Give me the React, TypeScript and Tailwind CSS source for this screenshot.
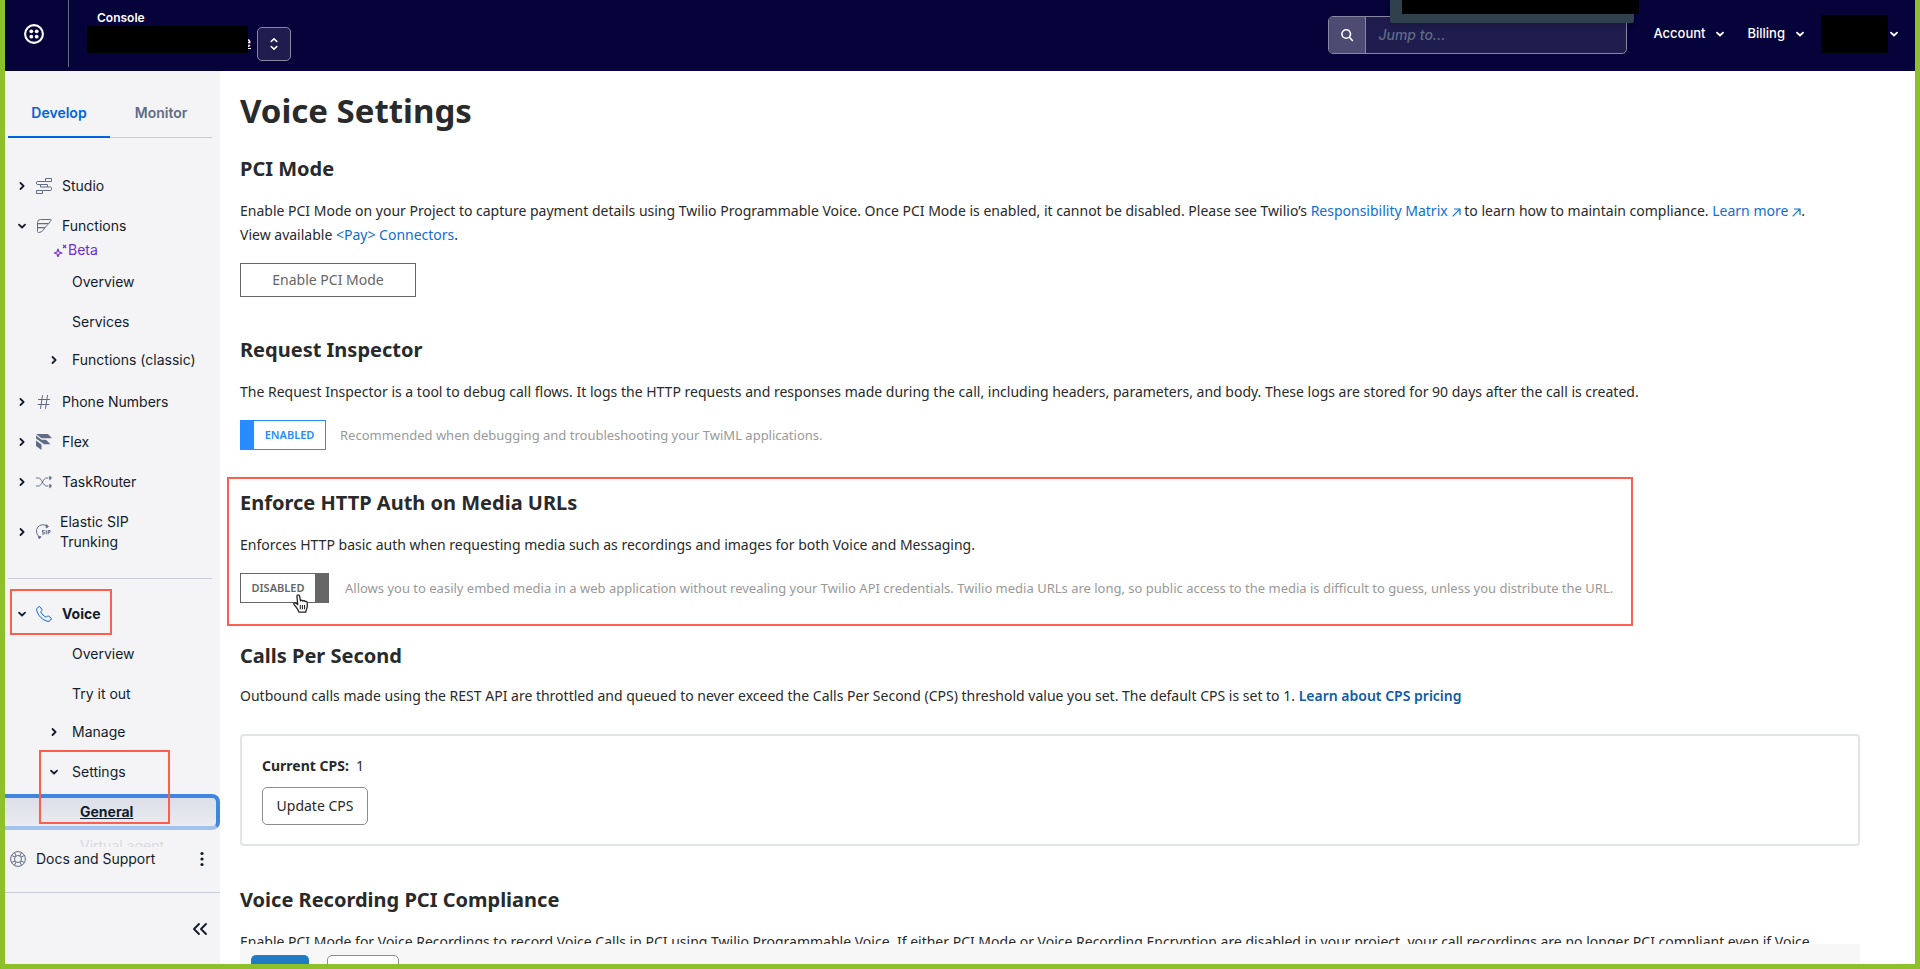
import type { ReactNode } from "react";

type IconProps = { className?: string };

function ChevronRight({ className = "" }: IconProps) {
  return (
    <svg viewBox="0 0 10 10" className={`size-[10px] flex-none ${className}`} fill="none" stroke="currentColor" strokeWidth="1.8" strokeLinecap="round" strokeLinejoin="round" aria-hidden="true">
      <path d="M3.5 2 6.6 5 3.5 8" />
    </svg>
  );
}

function ChevronDown({ className = "" }: IconProps) {
  return (
    <svg viewBox="0 0 10 10" className={`size-[10px] flex-none ${className}`} fill="none" stroke="currentColor" strokeWidth="1.8" strokeLinecap="round" strokeLinejoin="round" aria-hidden="true">
      <path d="M2 3.6 5 6.5 8 3.6" />
    </svg>
  );
}

function TwilioLogo() {
  return (
    <svg viewBox="0 0 20 20" className="size-5" aria-hidden="true">
      <circle cx="10" cy="10" r="8.9" fill="none" stroke="white" strokeWidth="2.1" />
      <g fill="white">
        <circle cx="7.3" cy="7.3" r="1.9" />
        <circle cx="12.7" cy="7.3" r="1.9" />
        <circle cx="7.3" cy="12.7" r="1.9" />
        <circle cx="12.7" cy="12.7" r="1.9" />
      </g>
    </svg>
  );
}

const product = "size-4 flex-none text-[#606b85]";

function StudioIcon() {
  return (
    <svg viewBox="0 0 16 16" className={product} fill="none" stroke="currentColor" strokeWidth="1" strokeLinejoin="round" aria-hidden="true">
      <rect x="9.5" y=".5" width="6" height="3" />
      <path d="M9.5 3.5H1.2c-1 0-1 3 0 3h3.3M4.5 6.5h7v2.5h-7zM11.5 9h3.3c1 0 1 3.5 0 3.5H6.5" />
      <rect x=".5" y="12.5" width="6" height="3" />
    </svg>
  );
}

function FunctionsIcon() {
  return (
    <svg viewBox="0 0 16 16" className={product} fill="none" stroke="currentColor" strokeWidth="1" strokeLinejoin="round" aria-hidden="true">
      <path d="M1.5 5h11l-1.2 1.8H1.5zM1.5 9h8l-1.2 1.8H1.5z" fill="currentColor" fillOpacity=".35" stroke="none" />
      <path d="M4.5 1.5h10.3c.5 0 .6.5.2.9-1.2 1.1-1.5 2.3-2.5 3.6-1 1.4-2.5 2-3.5 3.4C7.8 11.3 6.5 14.5 2.5 14.5c-.7 0-1-.3-1-1V4.5a3 3 0 0 1 3-3ZM1.5 5.5h11M1.5 9.5h7.3" />
    </svg>
  );
}

function HashIcon() {
  return (
    <svg viewBox="0 0 16 16" className={product} fill="none" stroke="currentColor" strokeWidth="1" strokeLinecap="round" aria-hidden="true">
      <path d="M6.5 1.5 4.5 14.5M11.5 1.5l-2 13M2.5 5.5h11M2 10.5h11" />
    </svg>
  );
}

function FlexIcon() {
  return (
    <svg viewBox="0 0 16 16" className={product} fill="currentColor" aria-hidden="true">
      <path d="M0 0h12l4 4.3H5.5L0 0Z" />
      <path d="M0 1.5 5.5 5.8H10l4.5 4.5H8L0 4.5Z" />
      <path d="M0 6.5 5.5 10.5V16L0 12Z" />
    </svg>
  );
}

function TaskRouterIcon() {
  return (
    <svg viewBox="0 0 16 16" className={product} fill="none" stroke="currentColor" strokeWidth="1" strokeLinecap="round" aria-hidden="true">
      <path d="M.5 4h2C6 4 7 12 10.5 12H12M.5 12h2C6 12 7 4 10.5 4H12" />
      <path d="m14 2.5 1.5 1.5L14 5.5ZM14 10.5l1.5 1.5-1.5 1.5Z" fill="currentColor" />
    </svg>
  );
}

function SipIcon() {
  return (
    <svg viewBox="0 0 16 16" className={product} fill="none" stroke="currentColor" strokeWidth="1" strokeLinecap="round" aria-hidden="true">
      <path d="M3 12.5A6.5 6.5 0 0 1 11 2" />
      <path d="m10.5 1 2 1.5-2 1.2ZM3.5 14.5l1.5-1.8-2.3-.2Z" fill="currentColor" />
      <path d="M8.2 6.5H6.5v1.7h1.7V10H6.3M10.2 6.5V10M12.2 10V6.5h1.8v1.8h-1.8" />
    </svg>
  );
}

function PhoneIcon() {
  return (
    <svg viewBox="0 0 16 16" className="size-4 flex-none text-[#0263e0]" fill="none" stroke="currentColor" strokeWidth="1" strokeLinejoin="round" aria-hidden="true">
      <path d="M3 .7C1.5 1.4.4 2.6.7 4.2 1.9 9.6 6.4 14.2 11.8 15.3c1.6.3 2.8-.8 3.5-2.3.2-.5 0-.9-.4-1.2l-2.4-1.7c-.4-.3-.9-.2-1.2.1l-1 1.1C8 10.3 5.7 8 4.7 5.7l1.1-1c.3-.3.4-.8.1-1.2L4.2 1.1C3.9.7 3.5.5 3 .7Z" />
    </svg>
  );
}

function SparkIcon() {
  return (
    <svg viewBox="0 0 13 13" className="size-[13px] flex-none" fill="none" stroke="currentColor" strokeWidth="1.1" strokeLinejoin="round" aria-hidden="true">
      <path d="M4 5 5 8l3 1-3 1-1 3-1-3-3-1 3-1Z" />
      <path d="m9 .8 3.200 3.200M12.200.8 9 4" />
    </svg>
  );
}

function LifebuoyIcon() {
  return (
    <svg viewBox="0 0 16 16" className={product} fill="none" stroke="currentColor" strokeWidth="1" aria-hidden="true">
      <circle cx="8" cy="8" r="7.4" />
      <circle cx="8" cy="8" r="3.5" />
      <path d="M4.5 1.5 6 5M1.5 4.5 5 6M11.5 1.5 10 5M14.5 4.5 11 6M4.5 14.5 6 11M1.5 11.5 5 10M11.5 14.5 10 11M14.5 11.5 11 10" />
    </svg>
  );
}

function ExternalIcon() {
  return (
    <svg viewBox="0 0 9 9" className="ml-1 inline size-[9px]" fill="none" stroke="currentColor" strokeWidth="1.2" aria-hidden="true">
      <path d="M.7 8.3 7.8 1.2M2 1h6v6" />
    </svg>
  );
}

function HandCursor() {
  return (
    <svg viewBox="0 0 14 18" className="absolute top-[21px] left-[53px] h-[19px] w-[15px]" fill="white" stroke="#222" strokeWidth="1.2" strokeLinejoin="round" aria-hidden="true">
      <path d="M3.6 2.2c0-1.8 2.3-1.8 2.6 0L7 6.5c.5-.9 2-.8 2.2.2.6-.8 2-.6 2.2.5.9-.5 2 0 2 1.200v3c0 2.300-1.100 3.200-1.400 5.800H5.500c-.3-2.200-1.800-3.300-3-5.200C1.600 10.700 0 9.700.8 8.800c.8-.9 2.400 0 3.600 1.300Z" />
      <path d="M6.800 10.500v4M8.800 10.500v4M10.800 10.500v4" strokeWidth="1" />
    </svg>
  );
}

const mark = "pointer-events-none absolute border-2 border-[#fb5f50]";

function NavItem({ label, icon, open = false, tall = false, strong = false, children }: { label: string; icon: ReactNode; open?: boolean; tall?: boolean; strong?: boolean; children?: ReactNode }) {
  return (
    <div className="relative">
      <a href="#" className={`flex items-center pl-3 ${tall ? "h-[60px]" : "h-10"}`}>
        {open ? <ChevronDown /> : <ChevronRight />}
        <span className="ml-[9px] flex">{icon}</span>
        <span className={`${tall ? "ml-2 w-24" : "ml-[10px]"} ${strong ? "font-bold" : ""}`}>{label}</span>
      </a>
      {children}
    </div>
  );
}

function SubItem({ label, chevron }: { label: string; chevron?: "right" | "down" }) {
  return (
    <a href="#" className={`flex items-center pl-11 ${chevron === "right" ? "h-9" : "h-10"}`}>
      <span className="w-[23px]">
        {chevron === "right" && <ChevronRight />}
        {chevron === "down" && <ChevronDown />}
      </span>
      {label}
    </a>
  );
}

function Header() {
  return (
    <header className="flex h-[71px] flex-none items-start bg-[#06033a] text-[13px] font-medium text-white">
      <a href="#" aria-label="Home" className="flex h-[67px] w-[64px] flex-none items-center justify-center border-r border-[#606b85] pr-[5px]">
        <TwilioLogo />
      </a>
      <div className="pl-[18px]">
        <div className="pt-[10px] pl-[10px] text-xs leading-4 font-semibold">Console</div>
        <div className="flex items-start">
          <div className="h-[27px] w-[161px] bg-black" />
          <div className="flex h-[31px] w-[3px] items-center justify-end overflow-hidden text-sm underline">e</div>
          <button type="button" aria-label="Switch account" className="mt-px ml-[6px] flex size-[34px] items-center justify-center rounded-[5px] border border-[#8886a0] bg-[#1f1c4e]">
            <svg viewBox="0 0 10 14" className="h-[14px] w-[10px]" fill="none" stroke="white" strokeWidth="1.6" strokeLinecap="round" strokeLinejoin="round" aria-hidden="true">
              <path d="M2.2 4.5 5 1.8l2.8 2.7M2.2 9.5 5 12.2l2.8-2.7" />
            </svg>
          </button>
        </div>
      </div>
      <div className="relative mt-4 ml-auto flex h-[38px] w-[299px] flex-none rounded-[5px] border border-[#8886a0] bg-[#1f1c4e]">
        <button type="button" aria-label="Search" className="flex w-[37px] items-center justify-center rounded-l-[4px] border-r border-[#8886a0] bg-[#4d4b71]">
          <svg viewBox="0 0 14 14" className="size-[14px]" fill="none" stroke="white" strokeWidth="1.6" strokeLinecap="round" aria-hidden="true">
            <circle cx="6.2" cy="6" r="4.3" />
            <path d="m9.4 9.3 3 3.2" />
          </svg>
        </button>
        <input type="text" aria-label="Jump to" placeholder="Jump to..." className="min-w-0 flex-1 bg-transparent px-3 text-sm italic placeholder:text-[#606b85]" />
        <div className="absolute -top-[17px] left-[61px] h-[23px] w-[244px] rounded-b-[2px] bg-[#31404d] shadow-md">
          <div className="ml-3 h-[14px] w-[237px] bg-black" />
        </div>
      </div>
      <nav className="mr-4 ml-[26px] flex h-[67px] items-center">
        <button type="button" className="flex items-center gap-[10px]">
          Account <ChevronDown />
        </button>
        <button type="button" className="ml-[22px] flex items-center gap-[10px]">
          Billing <ChevronDown />
        </button>
        <button type="button" aria-label="Profile" className="ml-4 flex items-center gap-[1px]">
          <span className="h-[38px] w-[67px] bg-black" />
          <ChevronDown />
        </button>
      </nav>
    </header>
  );
}

function Sidebar() {
  return (
    <aside className="flex w-[215px] flex-none flex-col bg-[#f4f4f6] font-['Inter',sans-serif] text-sm leading-5 text-[#121c2d]">
      <div className="mr-2 ml-[3px] flex h-[67px] flex-none border-b border-[#cacdd8] pt-[18px] font-semibold">
        <a href="#" className="-mb-px flex w-[102px] items-center justify-center border-b-2 border-[#0263e0] text-[#0263e0]">Develop</a>
        <a href="#" className="flex w-[102px] items-center justify-center text-[#606b85]">Monitor</a>
      </div>
      <nav className="relative min-h-0 flex-1 overflow-hidden pt-7">
        <NavItem label="Studio" icon={<StudioIcon />} />
        <NavItem label="Functions" icon={<FunctionsIcon />} open>
          <div className="-mt-[7px] mb-px flex h-[22px] items-center gap-px pl-[49px] text-[#6d2ed1]">
            <SparkIcon />
            Beta
          </div>
        </NavItem>
        <SubItem label="Overview" />
        <SubItem label="Services" />
        <div className="pb-1">
          <SubItem label="Functions (classic)" chevron="right" />
        </div>
        <NavItem label="Phone Numbers" icon={<HashIcon />} />
        <NavItem label="Flex" icon={<FlexIcon />} />
        <NavItem label="TaskRouter" icon={<TaskRouterIcon />} />
        <NavItem label="Elastic SIP Trunking" icon={<SipIcon />} tall />
        <hr className="mt-4 mr-2 mb-[15px] ml-[3px] border-[#cacdd8]" />
        <NavItem label="Voice" icon={<PhoneIcon />} open strong>
          <div className={`${mark} -top-[5px] left-[5px] h-[46px] w-[102px]`} />
        </NavItem>
        <SubItem label="Overview" />
        <SubItem label="Try it out" />
        <SubItem label="Manage" chevron="right" />
        <div className="relative pt-[2px]">
          <SubItem label="Settings" chevron="down" />
          <a href="#" className="mt-[2px] flex h-9 items-center rounded-r-lg border-4 border-l-0 border-[#3f86e0] border-b-[#a3c2f0] bg-linear-to-b from-[#dcdfe9] to-[#ebecf0] pl-[75px] font-bold underline">General</a>
          <div className={`${mark} top-0 left-[34px] h-[74px] w-[131px]`} />
        </div>
        <a href="#" className="flex h-8 items-center pl-[75px] text-[#d9dae0]">Virtual agent</a>
      </nav>
      <div className="flex h-[46px] flex-none items-center border-b border-[#cacdd8] pb-[22px] pl-[5px]">
        <LifebuoyIcon />
        <a href="#" className="ml-[10px] flex-1">Docs and Support</a>
        <button type="button" aria-label="More options" className="mr-4">
          <svg viewBox="0 0 4 16" className="h-4 w-1" fill="currentColor" aria-hidden="true">
            <circle cx="2" cy="2.5" r="1.6" />
            <circle cx="2" cy="8" r="1.6" />
            <circle cx="2" cy="13.5" r="1.6" />
          </svg>
        </button>
      </div>
      <div className="flex h-[71px] flex-none justify-end pr-3">
        <button type="button" aria-label="Collapse sidebar" className="h-[72px]">
          <svg viewBox="0 0 16 14" className="h-[14px] w-4" fill="none" stroke="currentColor" strokeWidth="1.9" strokeLinecap="round" strokeLinejoin="round" aria-hidden="true">
            <path d="M7 2 2 7l5 5M14 2 9 7l5 5" />
          </svg>
        </button>
      </div>
    </aside>
  );
}

function Heading({ children }: { children: ReactNode }) {
  return <h2 className="text-xl leading-6 font-bold">{children}</h2>;
}

function Settings() {
  return (
    <main className="flex min-w-0 flex-1 flex-col pr-[55px] pl-5 font-['Noto_Sans',sans-serif] text-sm leading-6 text-[#282a2b]">
      <div className="-ml-[13px] min-h-0 flex-1 overflow-hidden pl-[13px]">
        <h1 className="mt-5 text-[33px] leading-10 font-bold">Voice Settings</h1>

        <section className="pt-[26px]">
          <Heading>PCI Mode</Heading>
          <p className="mt-[18px]">
            Enable PCI Mode on your Project to capture payment details using Twilio Programmable Voice. Once PCI Mode is enabled, it cannot be disabled. Please see Twilio’s{" "}
            <a href="#" className="text-[#0b6fd6]">Responsibility Matrix<ExternalIcon /></a> to learn how to maintain compliance.{" "}
            <a href="#" className="text-[#0b6fd6]">Learn more<ExternalIcon /></a>.
            <br />
            View available <a href="#" className="text-[#0b6fd6]">&lt;Pay&gt; Connectors</a>.
          </p>
          <button type="button" className="mt-4 block h-[34px] w-44 border border-[#666] text-[#666]">Enable PCI Mode</button>
        </section>

        <section className="pt-[41px]">
          <Heading>Request Inspector</Heading>
          <p className="mt-[18px]">
            The Request Inspector is a tool to debug call flows. It logs the HTTP requests and responses made during the call, including headers, parameters, and body. These logs are stored for 90 days after the call is created.
          </p>
          <div className="mt-4 flex items-center">
            <button type="button" role="switch" aria-checked="true" className="flex h-[30px] w-[86px] flex-none items-center justify-center border border-l-[14px] border-[#288bff] text-[11px] font-semibold text-[#288bff]">ENABLED</button>
            <span className="ml-[14px] text-[13px] text-[#999]">Recommended when debugging and troubleshooting your TwiML applications.</span>
          </div>
        </section>

        <section className="relative mt-[27px] w-max pt-[14px] pb-[23px]">
          <div className={`${mark} inset-y-0 -right-5 -left-[13px]`} />
          <Heading>Enforce HTTP Auth on Media URLs</Heading>
          <p className="mt-[18px]">Enforces HTTP basic auth when requesting media such as recordings and images for both Voice and Messaging.</p>
          <div className="relative mt-4 flex items-center">
            <button type="button" role="switch" aria-checked="false" className="flex h-[30px] w-[89px] flex-none items-center justify-center border border-r-[14px] border-[#666] text-[11px] font-semibold text-[#666]">DISABLED</button>
            <span className="ml-4 text-[13px] text-[#999]">Allows you to easily embed media in a web application without revealing your Twilio API credentials. Twilio media URLs are long, so public access to the media is difficult to guess, unless you distribute the URL.</span>
            <HandCursor />
          </div>
        </section>

        <section className="pt-[18px]">
          <Heading>Calls Per Second</Heading>
          <p className="mt-4">
            Outbound calls made using the REST API are throttled and queued to never exceed the Calls Per Second (CPS) threshold value you set. The default CPS is set to 1.{" "}
            <a href="#" className="font-semibold text-[#0d5ba8]">Learn about CPS pricing</a>
          </p>
          <div className="mt-[26px] h-28 rounded-[4px] border-2 border-[#e1e6e5] px-5 pt-[18px]">
            <div><strong>Current CPS:</strong>&nbsp; 1</div>
            <button type="button" className="mt-[9px] block h-[38px] w-[106px] rounded-[5px] border border-[#8a8d8f]">Update CPS</button>
          </div>
        </section>

        <section className="pt-[42px]">
          <Heading>Voice Recording PCI Compliance</Heading>
          <p className="mt-[18px]">
            Enable PCI Mode for Voice Recordings to record Voice Calls in PCI using Twilio Programmable Voice. If either PCI Mode or Voice Recording Encryption are disabled in your project, your call recordings are no longer PCI compliant even if Voice
          </p>
        </section>
      </div>
      <footer className="flex h-5 flex-none items-start gap-[18px] overflow-hidden bg-[#f7f7f7] pt-[11px] pl-[11px]">
        <button type="button" aria-label="Save" className="h-9 w-[58px] flex-none rounded-[5px] bg-[#217bc4]" />
        <button type="button" aria-label="Cancel" className="h-9 w-[72px] flex-none rounded-[5px] border border-[#8a8d8f] bg-white" />
      </footer>
    </main>
  );
}

export default function App() {
  return (
    <div className="flex h-screen flex-col overflow-hidden border-[5px] border-t-0 border-[#8dc02b] bg-white font-['Inter',sans-serif]">
      <Header />
      <div className="flex min-h-0 flex-1">
        <Sidebar />
        <Settings />
      </div>
    </div>
  );
}
